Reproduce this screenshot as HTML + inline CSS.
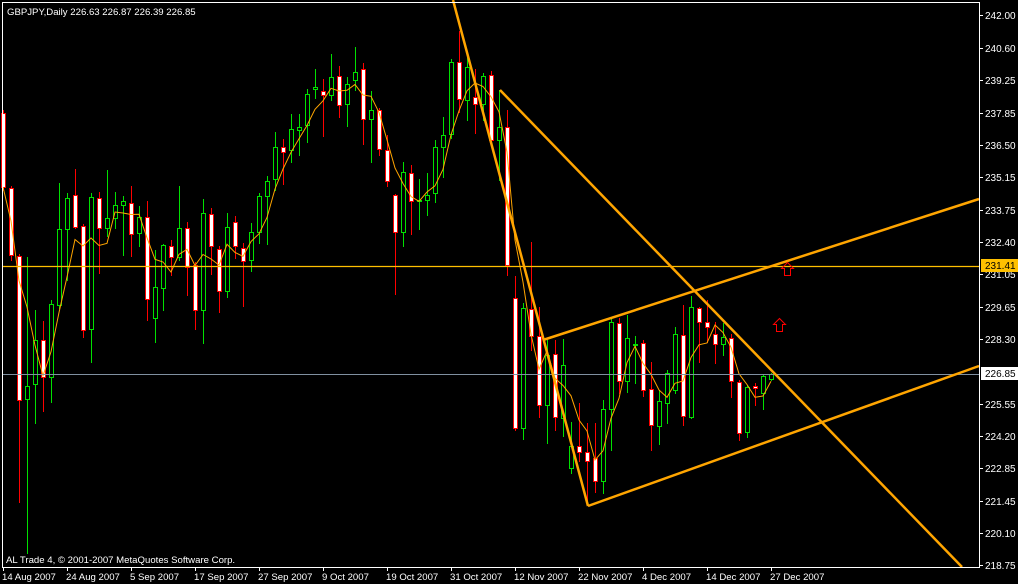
<!DOCTYPE html>
<html><head><meta charset="utf-8"><style>
html,body{margin:0;padding:0;background:#000;width:1018px;height:584px;overflow:hidden}
svg{display:block}
text{font-family:"Liberation Sans",sans-serif;font-size:9.6px}
text.ax{font-size:10px}
</style></head><body>
<svg id="s" width="1018" height="584" xmlns="http://www.w3.org/2000/svg">
<rect width="1018" height="584" fill="#000"/>
<g id="c"></g>
<polyline id="ma" fill="none" stroke="#ffa500" stroke-width="1"/>
<line x1="3" y1="266.5" x2="979" y2="266.5" stroke="#ffc000" stroke-width="1.2"/>
<line x1="3" y1="374.5" x2="979" y2="374.5" stroke="#8090a0" stroke-width="1"/>
<g stroke="#ffa500" stroke-width="2.5" fill="none">
<line x1="453" y1="0" x2="588" y2="506"/>
<line x1="588" y1="506" x2="979" y2="366"/>
<line x1="543" y1="340" x2="979" y2="199"/>
<line x1="500" y1="90" x2="962" y2="567"/>
</g>
<g fill="none" stroke="#ff0000" stroke-width="1">
<path d="M784.5 275.5v-7h-3l6-6 6 6h-3v7z"/>
<path d="M776.5 331.5v-7h-3l6-6 6 6h-3v7z"/>
</g>
<g stroke="#fff" stroke-width="1" fill="none">
<path d="M2.5 567V2.5H979.5V567.5H2"/>
</g>
<g id="ax"></g>
<text x="7" y="15" fill="#fff">GBPJPY,Daily  226.63 226.87 226.39 226.85</text>
<text x="6" y="563" fill="#fff">AL Trade 4, © 2001-2007 MetaQuotes Software Corp.</text>
<rect x="981" y="259" width="37" height="13" fill="#ffc000"/>
<text class="ax" x="985" y="269" fill="#000">231.41</text>
<rect x="981" y="367" width="37" height="13" fill="#fff"/>
<text class="ax" x="985" y="377" fill="#000">226.85</text>
</svg>
<script>
var D=[[113,187,0,110,190],[188,255,0,186,260],[256,400,0,254,502],[386,399,1,257,553],[340,384,1,310,423],[340,377,0,321,411],[304,377,1,300,402],[229,305,1,183,308],[198,229,1,193,280],[195,227,0,169,228],[226,330,0,224,337],[197,329,1,193,362],[198,228,0,192,273],[218,228,1,170,236],[205,218,1,192,228],[201,205,1,196,255],[203,234,0,186,256],[217,233,1,206,246],[217,299,0,201,320],[287,318,1,250,342],[245,288,1,244,310],[246,257,0,240,275],[228,257,1,186,260],[228,267,0,222,295],[265,310,0,262,329],[213,310,1,199,343],[214,246,0,208,274],[249,291,0,246,312],[227,291,1,213,297],[222,246,0,216,258],[248,261,0,243,306],[232,260,1,223,271],[196,232,1,193,243],[181,196,1,176,244],[147,179,1,132,190],[147,152,0,139,184],[129,150,1,114,162],[127,130,1,114,155],[94,125,1,89,142],[87,89,1,69,98],[91,95,0,79,136],[77,95,1,54,100],[76,105,0,66,117],[84,104,1,77,126],[72,80,1,47,90],[69,119,0,63,144],[110,119,1,91,162],[110,149,0,108,155],[150,181,0,135,186],[195,232,0,194,294],[172,232,1,162,246],[173,201,0,165,234],[200,201,1,179,229],[195,200,1,173,215],[147,193,1,140,202],[135,147,1,117,177],[62,134,1,59,138],[62,99,0,31,112],[67,100,1,57,120],[97,104,0,69,133],[76,104,1,73,120],[75,140,0,71,145],[127,140,1,90,180],[127,265,0,110,275],[298,428,0,276,430],[308,428,1,303,439],[309,336,0,242,350],[336,405,0,307,417],[355,405,1,340,443],[354,417,0,340,430],[365,418,1,339,436],[446,468,1,422,473],[446,452,0,403,461],[452,461,0,423,500],[458,481,0,423,492],[409,481,1,400,493],[322,409,1,318,450],[323,381,0,318,393],[338,381,1,315,392],[344,345,1,336,383],[343,390,0,340,396],[389,425,0,362,450],[401,426,1,390,444],[373,403,1,370,423],[334,390,1,327,393],[335,416,0,305,425],[307,417,1,296,418],[308,322,0,307,362],[322,327,0,300,342],[334,344,0,322,363],[337,344,1,323,355],[338,381,0,334,397],[382,433,0,380,440],[387,432,1,385,437],[386,388,0,383,405],[376,393,1,375,409],[374,379,1,373,380]];
var g=document.getElementById('c'),h='';
var closes=[];
D.forEach(function(d,i){var x=3+8*i,col=d[2]?'#00e000':'#ff0000',body=d[2]?'#000':'#fff';
h+='<rect x="'+x+'" y="'+d[3]+'" width="1" height="'+(d[4]-d[3]+1)+'" fill="'+col+'"/>';
var hh=d[1]-d[0]+1;if(hh<2)hh=2;
h+='<rect x="'+(x-2)+'" y="'+d[0]+'" width="5" height="'+hh+'" fill="'+col+'"/>';
if(hh>2)h+='<rect x="'+(x-1)+'" y="'+(d[0]+1)+'" width="3" height="'+(hh-2)+'" fill="'+body+'"/>';
closes.push(d[2]?d[0]:d[1]);});
g.innerHTML=h;
var pts=[];for(var i=0;i<closes.length;i++){var s=0,n=0;for(var k=Math.max(0,i-3);k<=i;k++){s+=closes[k];n++;}pts.push((3+8*i)+','+(s/n).toFixed(1));}
document.getElementById('ma').setAttribute('points',pts.join(' '));
var L=[["242.00",15],["240.60",48],["239.25",80],["237.85",113],["236.50",145],["235.15",177],["233.75",210],["232.40",242],["231.05",274],["229.65",307],["228.30",339],["225.55",404],["224.20",436],["222.85",468],["221.45",501],["220.10",533],["218.75",565]];
var a='';L.forEach(function(l){a+='<rect x="979" y="'+l[1]+'" width="4" height="1" fill="#fff"/><text class="ax" x="985" y="'+(l[1]+4)+'" fill="#fff">'+l[0]+'</text>';});
var T=[["14 Aug 2007",3],["24 Aug 2007",67],["5 Sep 2007",131],["17 Sep 2007",195],["27 Sep 2007",259],["9 Oct 2007",323],["19 Oct 2007",387],["31 Oct 2007",451],["12 Nov 2007",515],["22 Nov 2007",579],["4 Dec 2007",643],["14 Dec 2007",707],["27 Dec 2007",771]];
T.forEach(function(t){a+='<rect x="'+t[1]+'" y="567" width="1" height="4" fill="#fff"/><text x="'+(t[1]-1)+'" y="580" fill="#fff">'+t[0]+'</text>';});
document.getElementById('ax').innerHTML=a;
</script>
</body></html>
